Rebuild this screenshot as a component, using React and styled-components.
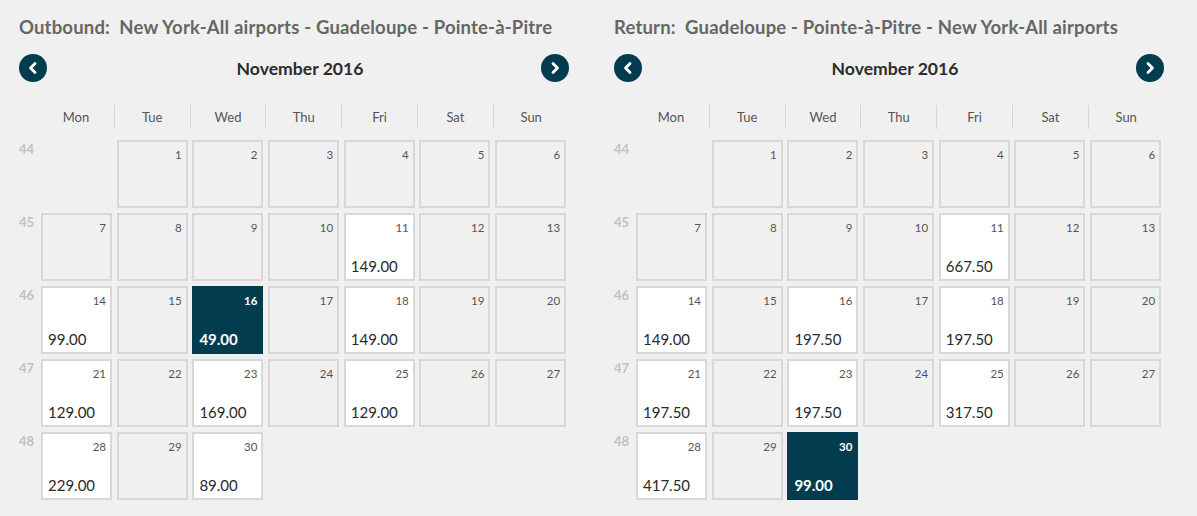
import React from "react";
import styled, { createGlobalStyle } from "styled-components";

const Global = createGlobalStyle`
  html, body { margin: 0; padding: 0; background: #f0f0f0; }
  body { font-family: Lato, "Open Sans", Arial, sans-serif; }
`;

const Page = styled.div`
  display: flex;
  gap: 45px;
  padding: 0 19px;
  width: 1197px;
  height: 516px;
  box-sizing: border-box;
  background: #f0f0f0;
`;

const Panel = styled.section`
  width: 550px;
  display: flex;
  flex-direction: column;
`;

const Title = styled.h2`
  margin: 15px 0 0;
  font-size: 18.5px;
  line-height: 24px;
  font-weight: 700;
  color: #666;
  white-space: pre;
  letter-spacing: 0.18px;
`;

const NavRow = styled.div`
  margin-top: 15px;
  height: 28px;
  display: flex;
  align-items: center;
`;

const MonthTitle = styled.div`
  flex: 1;
  text-align: center;
  padding-left: 12px;
  font-size: 17.6px;
  font-weight: 700;
  color: #2c2c2c;
`;

const NavButton = styled.button`
  width: 28px;
  height: 28px;
  border-radius: 50%;
  border: 0;
  padding: 0;
  background: #033c4f;
  display: flex;
  align-items: center;
  justify-content: center;
  cursor: pointer;
`;

const DayHeader = styled.div`
  margin-top: 23px;
  margin-left: 19px;
  display: grid;
  grid-template-columns: repeat(7, 75.8px);
  height: 24px;
`;

const DayName = styled.div`
  display: flex;
  align-items: center;
  justify-content: center;
  font-size: 13px;
  color: #555;
  border-left: ${(p) => (p.$first ? "none" : "1px solid #d6d6d6")};
`;

const Weeks = styled.div`
  margin-top: 11px;
  display: flex;
  flex-direction: column;
  gap: 5px;
`;

const WeekRow = styled.div`
  display: flex;
`;

const WeekNum = styled.div`
  width: 22px;
  padding-top: 2px;
  font-size: 13px;
  font-weight: 700;
  color: #c2c2c2;
  line-height: 14px;
`;

const CellGrid = styled.div`
  display: grid;
  grid-template-columns: repeat(7, 71px);
  column-gap: 4.7px;
`;

const Cell = styled.div`
  box-sizing: border-box;
  width: 71px;
  height: 68px;
  border: 2px solid ${(p) => (p.$selected ? "#033c4f" : "#d8d8d8")};
  background: ${(p) => (p.$selected ? "#033c4f" : p.$price ? "#ffffff" : "#f0f0f0")};
  display: flex;
  flex-direction: column;
  justify-content: space-between;
  padding: 6px 4px 4px 5px;
  visibility: ${(p) => (p.$empty ? "hidden" : "visible")};
`;

const DayNum = styled.div`
  text-align: right;
  font-size: 11.5px;
  line-height: 14px;
  color: ${(p) => (p.$selected ? "#fff" : "#555")};
  font-weight: ${(p) => (p.$selected ? 700 : 400)};
`;

const Price = styled.div`
  font-size: 15px;
  line-height: 18px;
  color: ${(p) => (p.$selected ? "#fff" : "#2a2a2a")};
  font-weight: ${(p) => (p.$selected ? 700 : 400)};
`;

const Chevron = ({ dir }) => (
  <svg width="12" height="14" viewBox="0 0 12 14">
    <polyline
      points={dir === "left" ? "8,2.5 3.5,7 8,11.5" : "4,2.5 8.5,7 4,11.5"}
      fill="none"
      stroke="#fff"
      strokeWidth="2.8"
      strokeLinecap="round"
      strokeLinejoin="round"
    />
  </svg>
);

const DAYS = ["Mon", "Tue", "Wed", "Thu", "Fri", "Sat", "Sun"];

const buildWeeks = (prices, selected) => {
  const weeks = [];
  const firstOffset = 1; // Nov 1 2016 is a Tuesday
  for (let w = 0; w < 5; w++) {
    const cells = [];
    for (let d = 0; d < 7; d++) {
      const idx = w * 7 + d - firstOffset + 1;
      if (idx < 1 || idx > 30) cells.push(null);
      else cells.push({ day: idx, price: prices[idx], selected: idx === selected });
    }
    weeks.push({ num: 44 + w, cells });
  }
  return weeks;
};

const Calendar = ({ title, prices, selected }) => {
  const weeks = buildWeeks(prices, selected);
  return (
    <Panel>
      <Title>{title}</Title>
      <NavRow>
        <NavButton aria-label="Previous month"><Chevron dir="left" /></NavButton>
        <MonthTitle>November 2016</MonthTitle>
        <NavButton aria-label="Next month"><Chevron dir="right" /></NavButton>
      </NavRow>
      <DayHeader>
        {DAYS.map((d, i) => (
          <DayName key={d} $first={i === 0}>{d}</DayName>
        ))}
      </DayHeader>
      <Weeks>
        {weeks.map((w) => (
          <WeekRow key={w.num}>
            <WeekNum>{w.num}</WeekNum>
            <CellGrid>
              {w.cells.map((c, i) =>
                c ? (
                  <Cell key={i} $price={!!c.price} $selected={c.selected}>
                    <DayNum $selected={c.selected}>{c.day}</DayNum>
                    <Price $selected={c.selected}>{c.price || ""}</Price>
                  </Cell>
                ) : (
                  <Cell key={i} $empty />
                )
              )}
            </CellGrid>
          </WeekRow>
        ))}
      </Weeks>
    </Panel>
  );
};

const outPrices = { 11: "149.00", 14: "99.00", 16: "49.00", 18: "149.00", 21: "129.00", 23: "169.00", 25: "129.00", 28: "229.00", 30: "89.00" };
const retPrices = { 11: "667.50", 14: "149.00", 16: "197.50", 18: "197.50", 21: "197.50", 23: "197.50", 25: "317.50", 28: "417.50", 30: "99.00" };

export default function App() {
  return (
    <>
      <Global />
      <Page>
        <Calendar title={"Outbound:  New York-All airports - Guadeloupe - Pointe-à-Pitre"} prices={outPrices} selected={16} />
        <Calendar title={"Return:  Guadeloupe - Pointe-à-Pitre - New York-All airports"} prices={retPrices} selected={30} />
      </Page>
    </>
  );
}
